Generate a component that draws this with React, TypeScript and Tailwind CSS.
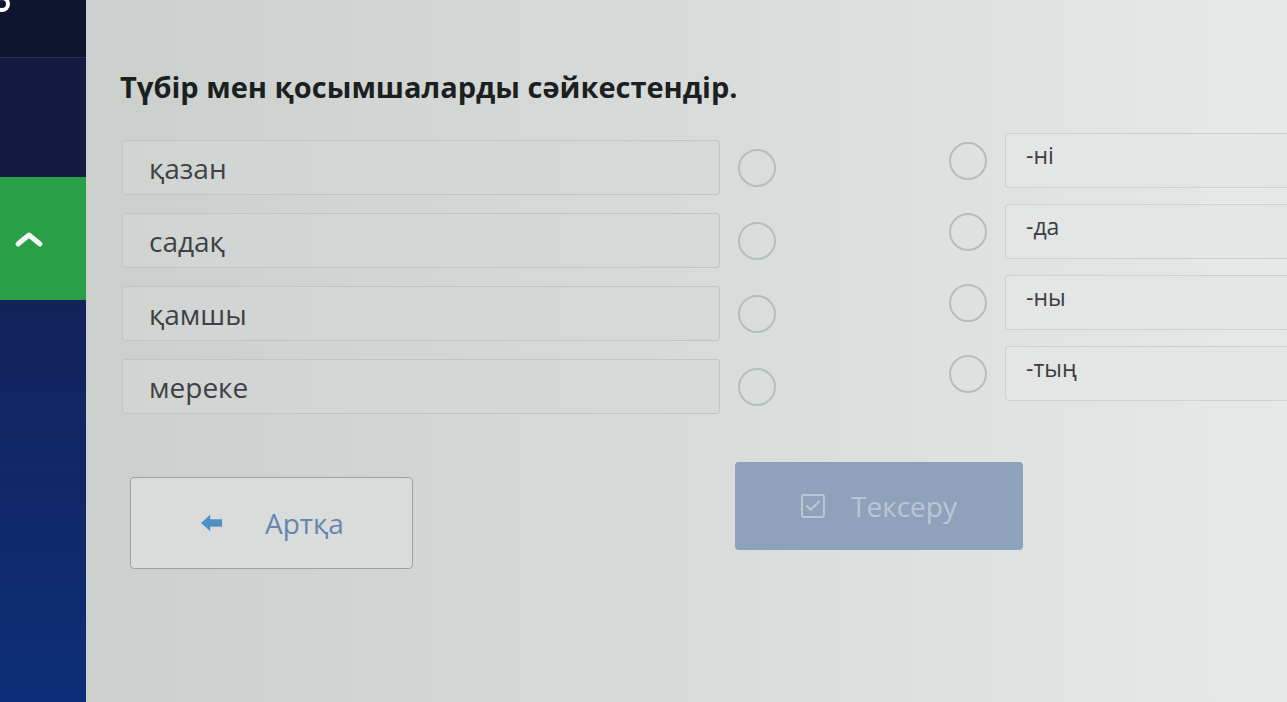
import { Check } from 'lucide-react';

const roots = ['қазан', 'садақ', 'қамшы', 'мереке'];
const suffixes = ['-ні', '-да', '-ны', '-тың'];

function Circle() {
  return <div className="h-[38px] w-[38px] shrink-0 rounded-full border-2 border-[#b3bfbb]" />;
}

export default function App() {
  return (
    <div
      className="flex h-[702px] w-[1287px] overflow-hidden bg-gradient-to-r from-[#c9cecb] via-[#d6dad8] to-[#e6e9e8]"
      style={{ fontFamily: '"Open Sans", "Noto Sans", sans-serif' }}
    >
      {/* сол жақ панель */}
      <div className="flex w-[86px] shrink-0 flex-col bg-gradient-to-b from-[#141a44] to-[#0c2e78]">
        <div className="relative h-[58px] border-b border-[#26305a] bg-[#10152f]">
          <div className="absolute -left-[6px] -top-[4px] h-[16px] w-[16px] rounded-full border-[4px] border-white" />
        </div>
        <div className="h-[119px] bg-[#141a42]" />
        <div className="flex h-[123px] items-center justify-center bg-[#29a046] pr-[28px]">
          <svg width="30" height="18" viewBox="0 0 30 18" fill="none">
            <polyline points="4,14 15,5 26,14" stroke="#f4f6f4" strokeWidth="5" strokeLinecap="round" strokeLinejoin="round" />
          </svg>
        </div>
        <div className="flex-1" />
      </div>

      {/* негізгі бөлік */}
      <div className="flex flex-1 flex-col pl-[34px] pt-[68px]">
        <h1 className="text-[29px] font-bold leading-[38px] text-[#1c1f22]">
          Түбір мен қосымшаларды сәйкестендір.
        </h1>

        <div className="mt-[34px] flex pl-[2px]">
          <div className="flex flex-col gap-[18px]">
            {roots.map((r) => (
              <div key={r} className="flex items-center gap-[18px]">
                <div className="flex h-[55px] w-[598px] items-center rounded-[3px] border border-[#bfc5c2] bg-[#d3d7d5]/60 px-[26px] text-[28px] text-[#3e4245]">
                  {r}
                </div>
                <Circle />
              </div>
            ))}
          </div>

          <div className="ml-[173px] -mt-[7px] flex flex-col gap-[16px]">
            {suffixes.map((s) => (
              <div key={s} className="flex items-center gap-[18px]">
                <Circle />
                <div className="flex h-[55px] w-[320px] items-center rounded-l-[4px] border border-r-0 border-[#ccd1cf] bg-[#e3e6e5] px-[20px] pb-[10px] text-[23px] text-[#3a3e41]">
                  {s}
                </div>
              </div>
            ))}
          </div>
        </div>

        <div className="mt-[48px] flex items-start pl-[10px]">
          <button className="mt-[15px] flex h-[92px] w-[283px] items-center rounded-[4px] border border-[#9aa2a3] bg-[#d9dcdb] pl-[68px] text-[28px] text-[#6288ad]">
            <svg width="26" height="22" viewBox="0 0 28 24" className="mr-[40px]">
              <path d="M2 12 L12 3 L12 8 L25 8 L25 16 L12 16 L12 21 Z" fill="#4f91c4" />
            </svg>
            Артқа
          </button>
          <button className="ml-[322px] flex h-[88px] w-[288px] items-center justify-center gap-[26px] rounded-[4px] bg-[#8ea2bb] text-[28px] text-[#b9c6d6]">
            <span className="flex h-[24px] w-[24px] items-center justify-center rounded-[3px] border-2 border-[#b9c6d6]">
              <Check size={18} strokeWidth={3} />
            </span>
            Тексеру
          </button>
        </div>
      </div>
    </div>
  );
}
